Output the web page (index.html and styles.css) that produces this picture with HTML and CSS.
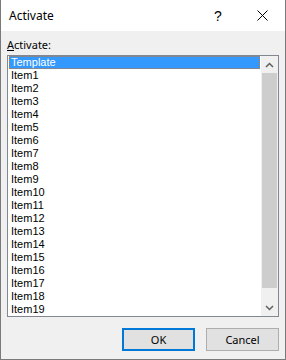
FILE: index.html
```html
<!DOCTYPE html>
<html lang="en">
<head>
  <meta charset="UTF-8">
  <title>Activate</title>
  <meta name="viewport" content="width=device-width, initial-scale=1">
  <link rel="stylesheet" href="styles.css">
</head>
<body>
<div class="dialog">
  <div class="titlebar">
    <span class="title">Activate</span>
    <span class="tb-btn help">?</span>
    <span class="tb-btn close">
      <svg width="11" height="11" viewBox="0 0 11 11"><path d="M0.5 0.5 L10.5 10.5 M10.5 0.5 L0.5 10.5" stroke="#000" stroke-width="1" fill="none"/></svg>
    </span>
  </div>

  <div class="content">
    <label class="caption"><u>A</u>ctivate:</label>

    <div class="listbox">
      <ul class="items">
        <li class="selected">Template</li>
        <li>Item1</li>
        <li>Item2</li>
        <li>Item3</li>
        <li>Item4</li>
        <li>Item5</li>
        <li>Item6</li>
        <li>Item7</li>
        <li>Item8</li>
        <li>Item9</li>
        <li>Item10</li>
        <li>Item11</li>
        <li>Item12</li>
        <li>Item13</li>
        <li>Item14</li>
        <li>Item15</li>
        <li>Item16</li>
        <li>Item17</li>
        <li>Item18</li>
        <li>Item19</li>
      </ul>
      <div class="scrollbar">
        <div class="arrow">
          <svg width="9" height="6" viewBox="0 0 9 6"><polyline points="1,5 4.5,1.5 8,5" stroke="#606060" stroke-width="1.5" fill="none"/></svg>
        </div>
        <div class="track"><div class="thumb"></div></div>
        <div class="arrow">
          <svg width="9" height="6" viewBox="0 0 9 6"><polyline points="1,1 4.5,4.5 8,1" stroke="#606060" stroke-width="1.5" fill="none"/></svg>
        </div>
      </div>
    </div>

    <div class="buttons">
      <button class="default">OK</button>
      <button>Cancel</button>
    </div>
  </div>
</div>
</body>
</html>
```

FILE: styles.css
```css
body {
  margin: 0;
  font-family: "Noto Sans", "Open Sans", sans-serif;
}
.dialog {
  width: 286px;
  height: 360px;
  box-sizing: border-box;
  border: 1px solid #7a7a7a;
  border-top: none;
  background: #f0f0f0;
  display: flex;
  flex-direction: column;
}
.titlebar {
  height: 31px;
  background: #fff;
  display: flex;
  align-items: center;
}
.title {
  flex: 1;
  padding-left: 8px;
  font-size: 12px;
  color: #000;
}
.tb-btn {
  width: 46px;
  height: 31px;
  display: flex;
  align-items: center;
  justify-content: center;
}
.help {
  font-family: "Liberation Sans", sans-serif;
  font-size: 14px;
  color: #000;
  padding-left: 4px;
  box-sizing: border-box;
}
.content {
  padding: 6px 6px 0;
  display: flex;
  flex-direction: column;
}
.caption {
  font-size: 11px;
  line-height: 15px;
  height: 15px;
  color: #000;
}
.listbox {
  margin-top: 3px;
  height: 262px;
  box-sizing: border-box;
  border: 1px solid #828790;
  background: #fff;
  display: flex;
}
.items {
  flex: 1;
  list-style: none;
  margin: 0;
  padding: 0 1px;
  overflow: hidden;
  font-family: "Liberation Sans", Arial, sans-serif;
  font-size: 11px;
  line-height: 13px;
  color: #000;
}
.items li {
  height: 13px;
  padding-left: 2px;
  white-space: nowrap;
}
.items li.selected {
  background: #3399ff;
  color: #fff;
  outline: 1px dotted #c9762c;
  outline-offset: -1px;
}
.scrollbar {
  width: 17px;
  background: #f0f0f0;
  display: flex;
  flex-direction: column;
}
.arrow {
  height: 17px;
  display: flex;
  align-items: center;
  justify-content: center;
}
.track {
  flex: 1;
  padding: 0 1px;
}
.thumb {
  height: 215px;
  background: #cdcdcd;
}
.buttons {
  margin-top: 11px;
  display: flex;
  justify-content: flex-end;
  gap: 11px;
}
.buttons button {
  width: 73px;
  height: 23px;
  padding: 0;
  font-family: "Noto Sans", "Open Sans", sans-serif;
  font-size: 11px;
  color: #000;
  background: #e1e1e1;
  border: 1px solid #adadad;
}
.buttons button.default {
  border: 2px solid #0078d7;
}
```
